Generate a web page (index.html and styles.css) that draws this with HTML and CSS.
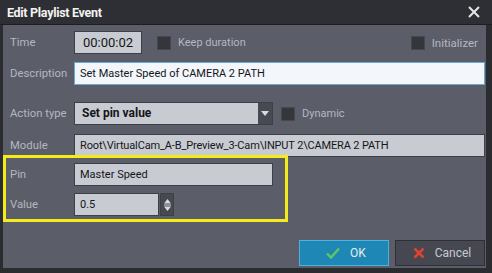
FILE: index.html
```html
<!DOCTYPE html>
<html lang="en">
<head>
  <meta charset="UTF-8">
  <title>Edit Playlist Event</title>
  <link rel="stylesheet" href="styles.css">
</head>
<body>
  <div class="window">
    <div class="titlebar">
      <span class="title">Edit Playlist Event</span>
      <svg class="close" width="12" height="12" viewBox="0 0 12 12"><path d="M1 1L11 11M11 1L1 11" stroke="#e6e6e6" stroke-width="2"/></svg>
    </div>
    <div class="content">
      <div class="row row-time">
        <label class="lbl">Time</label>
        <div class="field time">00:00:02</div>
        <span class="check"></span><span class="check-lbl">Keep duration</span>
        <span class="spacer"></span>
        <span class="check"></span><span class="check-lbl">Initializer</span>
      </div>
      <div class="row row-desc">
        <label class="lbl">Description</label>
        <div class="field desc">Set Master Speed of CAMERA 2 PATH</div>
      </div>
      <div class="row row-action">
        <label class="lbl">Action type</label>
        <div class="select">
          <div class="select-val">Set pin value</div>
          <div class="select-btn"><svg width="8" height="5" viewBox="0 0 8 5"><path d="M0 0H8L4 5Z" fill="#d8dae0"/></svg></div>
        </div>
        <span class="check"></span><span class="check-lbl">Dynamic</span>
      </div>
      <div class="row row-module">
        <label class="lbl">Module</label>
        <div class="field module">Root\VirtualCam_A-B_Preview_3-Cam\INPUT 2\CAMERA 2 PATH</div>
      </div>
      <div class="row row-pin">
        <label class="lbl">Pin</label>
        <div class="field pin">Master Speed</div>
      </div>
      <div class="row row-value">
        <label class="lbl">Value</label>
        <div class="field value">0.5</div>
        <div class="spin">
          <svg width="9" height="14" viewBox="0 0 9 14"><path d="M4.5 1L8 5.5H1Z M4.5 13L8 8.5H1Z" fill="#d8dae0"/><path d="M1 7H8" stroke="#d8dae0" stroke-width="1"/></svg>
        </div>
      </div>
      <div class="buttons">
        <button class="btn btn-ok"><svg width="14" height="12" viewBox="0 0 14 12"><path d="M1 6.5L5 10.5L13 1.5" stroke="#5fc95a" stroke-width="2.4" fill="none"/></svg>OK</button>
        <button class="btn btn-cancel"><svg width="12" height="12" viewBox="0 0 12 12"><path d="M1.5 1.5L10.5 10.5M10.5 1.5L1.5 10.5" stroke="#e2412f" stroke-width="2.6"/></svg>Cancel</button>
      </div>
      <div class="highlight"></div>
    </div>
  </div>
</body>
</html>
```

FILE: styles.css
```css
body {
  margin: 0;
  background: #2b2c30;
  font-family: Roboto, "Liberation Sans", sans-serif;
  font-size: 11px;
}
.window {
  width: 492px;
  height: 273px;
  background: #2b2c30;
  display: flex;
  flex-direction: column;
}
.titlebar {
  height: 24px;
  display: flex;
  align-items: center;
  padding: 0 12px 0 7px;
  background: #2e2f34;
  border-bottom: 1px solid #1d1e21;
}
.title {
  flex: 1;
  color: #f2f2f2;
  font-weight: bold;
  font-size: 12.5px;
  letter-spacing: -0.3px;
}
.content {
  position: relative;
  margin: 0 6px 5px 3px;
  flex: 1;
  background: #5b5e69;
  padding: 6px 0 0 7px;
}
.row {
  display: flex;
  align-items: center;
  height: 23px;
}
.row-desc { margin-top: 8px; }
.row-action { margin-top: 17px; }
.row-module { margin-top: 9px; }
.row-pin { margin-top: 6px; }
.row-value { margin-top: 7px; }
.lbl {
  flex: none;
  width: 64px;
  white-space: nowrap;
  color: #b4b7bf;
  font-size: 11.3px;
}
.field {
  flex: none;
  height: 23px;
  box-sizing: border-box;
  border: 1px solid #3d4047;
  background: #c8cbd2;
  color: #151619;
  line-height: 21px;
  font-size: 11px;
  padding: 0 5px;
  white-space: nowrap;
  overflow: hidden;
}
.time {
  width: 68px;
  text-align: center;
  font-size: 13px;
}
.desc {
  width: 411px;
  background: #f3f6fa;
  border-color: #6aa9d0;
}
.module { width: 411px; letter-spacing: -0.15px; }
.pin { width: 199px; }
.value { width: 85px; }
.spin {
  width: 14px;
  height: 23px;
  margin-left: 1px;
  background: #464950;
  border: 1px solid #3d4047;
  box-sizing: border-box;
  display: flex;
  align-items: center;
  justify-content: center;
}
.check {
  flex: none;
  width: 14px;
  height: 14px;
  box-sizing: border-box;
  background: #35363b;
  border: 1px solid #46484e;
  margin: 0 7px 0 15px;
}
.check-lbl {
  color: #b4b7bf;
  font-size: 11px;
  white-space: nowrap;
}
.spacer { flex: 1; }
.row-time .check-lbl:last-child { margin-right: 8px; font-size: 11.5px; }
.row-time .check:nth-of-type(2) { margin-left: 0; margin-right: 8px; }
.select {
  flex: none;
  display: flex;
  width: 199px;
  height: 23px;
  box-sizing: border-box;
  border: 1px solid #3d4047;
}
.select-val {
  flex: 1;
  background: #c8cbd2;
  color: #151619;
  font-weight: bold;
  font-size: 12px;
  line-height: 21px;
  padding: 0 7px;
}
.select-btn {
  width: 14px;
  background: #474a52;
  display: flex;
  align-items: center;
  justify-content: center;
}
.row-action .check { margin-left: 8px; }
.buttons {
  display: flex;
  justify-content: flex-end;
  gap: 6px;
  margin: 24px 1px 0 0;
}
.btn {
  width: 90px;
  height: 26px;
  box-sizing: border-box;
  display: flex;
  align-items: center;
  justify-content: center;
  gap: 10px;
  font-family: inherit;
  font-size: 12px;
  color: #e9ecf0;
  padding: 0 0 0 4px;
}
.btn-ok {
  background: #1e87b6;
  border: 1px solid #4bb3df;
}
.btn-cancel {
  background: #454851;
  border: 1px solid #2f3035;
  color: #c8cbd2;
}
.highlight {
  position: absolute;
  left: 0;
  top: 130px;
  width: 279px;
  height: 61px;
  border: 3px solid #f4ec1a;
}
```
